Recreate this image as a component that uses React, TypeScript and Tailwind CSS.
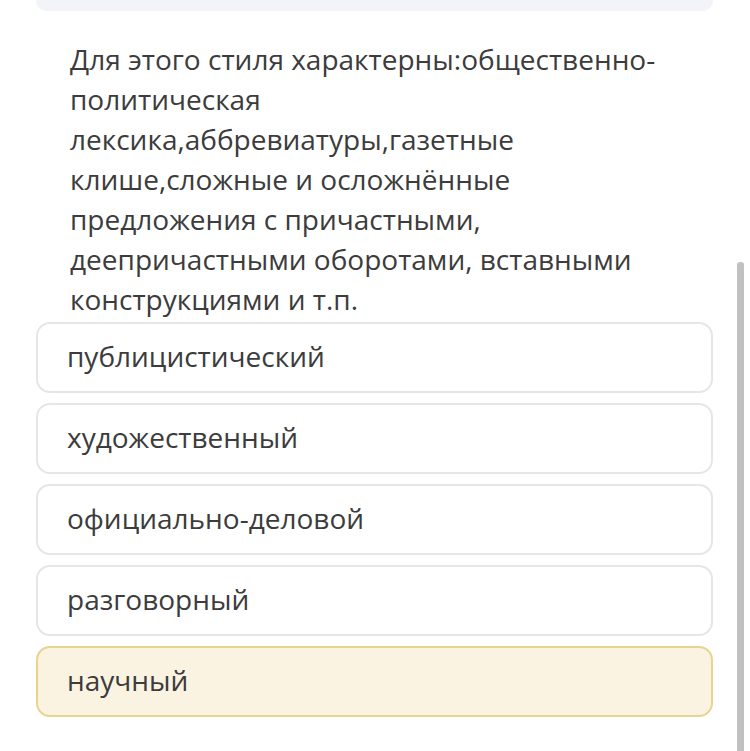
import React from 'react';

const options = ['публицистический', 'художественный', 'официально-деловой', 'разговорный', 'научный'];
const selected = 'научный';

export default function App() {
  return (
    <div className="relative w-[750px] h-[751px] overflow-hidden bg-white font-['Open_Sans',sans-serif] text-[#3c3c3c]">
      <div className="mx-[36px] w-[677px] h-[11px] rounded-b-[10px] bg-[#f3f4f7]" />
      <p className="pl-[70px] w-[670px] pt-[28px] text-[28px] leading-[40px]">
        Для этого стиля характерны:общественно-политическая лексика,аббревиатуры,газетные клише,сложные и осложнённые предложения с причастными, деепричастными оборотами, вставными конструкциями и т.п.
      </p>
      <div className="mt-[3px] ml-[36px] w-[677px] flex flex-col gap-[10px]">
        {options.map((o) => (
          <div
            key={o}
            className={
              'h-[71px] rounded-[14px] border-2 flex items-center pl-[29px] pb-[4px] text-[28px] ' +
              (o === selected ? 'bg-[#fbf3e2] border-[#e8d48f]' : 'bg-white border-[#e6e6e6]')
            }
          >
            {o}
          </div>
        ))}
      </div>
      <div className="absolute left-[737px] top-[262px] w-[7px] h-[489px] bg-[#c1c1c1] rounded-t-[3px]" />
    </div>
  );
}
